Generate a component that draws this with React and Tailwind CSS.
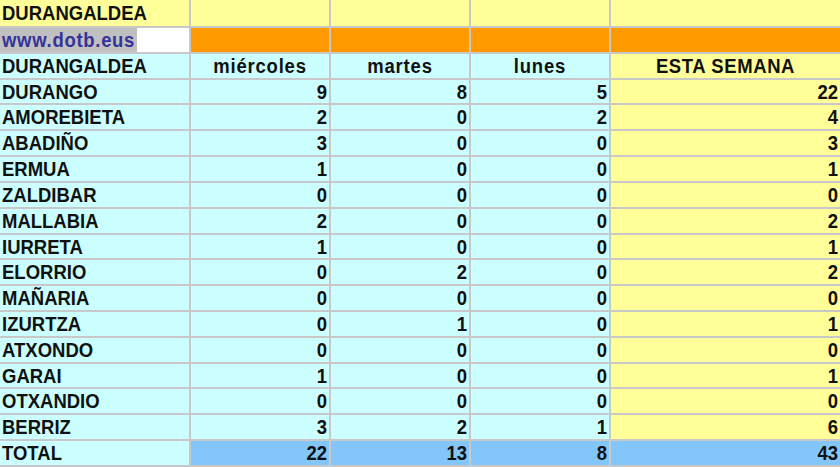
import React from 'react';

const rows = [
  ['DURANGO', 9, 8, 5, 22],
  ['AMOREBIETA', 2, 0, 2, 4],
  ['ABADIÑO', 3, 0, 0, 3],
  ['ERMUA', 1, 0, 0, 1],
  ['ZALDIBAR', 0, 0, 0, 0],
  ['MALLABIA', 2, 0, 0, 2],
  ['IURRETA', 1, 0, 0, 1],
  ['ELORRIO', 0, 2, 0, 2],
  ['MAÑARIA', 0, 0, 0, 0],
  ['IZURTZA', 0, 1, 0, 1],
  ['ATXONDO', 0, 0, 0, 0],
  ['GARAI', 1, 0, 0, 1],
  ['OTXANDIO', 0, 0, 0, 0],
  ['BERRIZ', 3, 2, 1, 6],
];

const cell = 'flex items-center overflow-hidden whitespace-nowrap';
const num = `${cell} justify-end pr-[2px]`;
const name = `${cell} justify-start pl-[2px]`;

// text in the sheet is a touch taller than Arial at this width
function T({ children, className = '' }) {
  return <span className={`inline-block translate-y-[1px] scale-y-[1.08] ${className}`}>{children}</span>;
}

export default function App() {
  return (
    <div
      className="w-[840px] h-[467px] overflow-hidden bg-[#c8c8c8] pb-[2px] text-[18.5px] font-bold text-[#111]"
      style={{ fontFamily: '"Liberation Sans", Arial, sans-serif' }}
    >
      <div className="grid grid-cols-[189px_138px_138px_138px_1fr] grid-rows-[26px_repeat(17,23.82px)] gap-[2px]">
        {/* Title row */}
        <div className={`${name} bg-[#ffff99]`}><T>DURANGALDEA</T></div>
        <div className="bg-[#ffff99]"></div>
        <div className="bg-[#ffff99]"></div>
        <div className="bg-[#ffff99]"></div>
        <div className="bg-[#ffff99]"></div>

        {/* Link row */}
        <div className="flex bg-white">
          <div className="flex items-center w-[137px] bg-[#c0c0c0] pl-[2px] text-[#333399]">
            <T className="tracking-[0.7px]">www.dotb.eus</T>
          </div>
        </div>
        <div className="bg-[#ff9900]"></div>
        <div className="bg-[#ff9900]"></div>
        <div className="bg-[#ff9900]"></div>
        <div className="bg-[#ff9900]"></div>

        {/* Header */}
        <div className={`${name} bg-[#ccffff]`}><T>DURANGALDEA</T></div>
        <div className={`${cell} justify-center bg-[#ccffff]`}><T className="tracking-[0.8px]">miércoles</T></div>
        <div className={`${cell} justify-center bg-[#ccffff]`}><T className="tracking-[0.8px]">martes</T></div>
        <div className={`${cell} justify-center bg-[#ccffff]`}><T className="tracking-[0.8px]">lunes</T></div>
        <div className={`${cell} justify-center bg-[#ffff99]`}><T className="tracking-[0.6px]">ESTA SEMANA</T></div>

        {rows.map((r) => (
          <React.Fragment key={r[0]}>
            <div className={`${name} bg-[#ccffff]`}><T>{r[0]}</T></div>
            <div className={`${num} bg-[#ccffff]`}><T>{r[1]}</T></div>
            <div className={`${num} bg-[#ccffff]`}><T>{r[2]}</T></div>
            <div className={`${num} bg-[#ccffff]`}><T>{r[3]}</T></div>
            <div className={`${num} bg-[#ffff99]`}><T>{r[4]}</T></div>
          </React.Fragment>
        ))}

        {/* Total */}
        <div className={`${name} bg-[#ccffff]`}><T>TOTAL</T></div>
        <div className={`${num} bg-[#82c6fa]`}><T>22</T></div>
        <div className={`${num} bg-[#82c6fa]`}><T>13</T></div>
        <div className={`${num} bg-[#82c6fa]`}><T>8</T></div>
        <div className={`${num} bg-[#82c6fa]`}><T>43</T></div>
      </div>
    </div>
  );
}
